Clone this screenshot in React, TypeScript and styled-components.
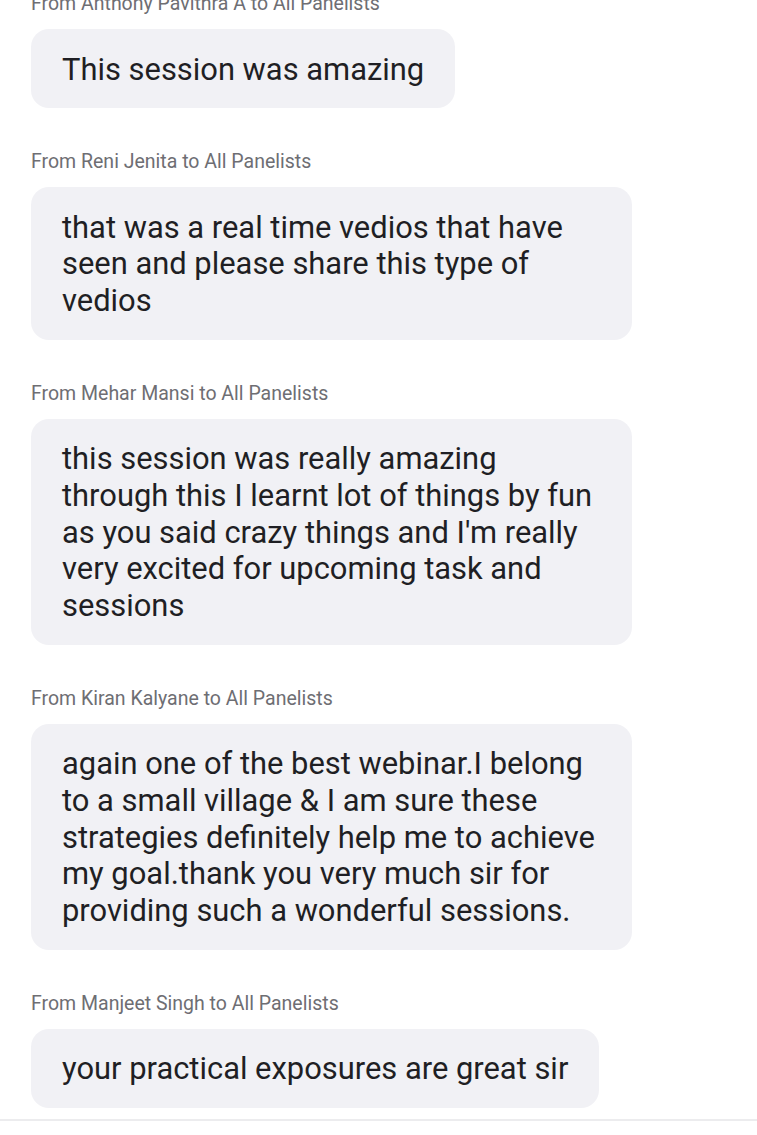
import styled, { createGlobalStyle } from "styled-components";

const GlobalStyle = createGlobalStyle`
  html, body {
    margin: 0;
    padding: 0;
    background: #ffffff;
  }
  body {
    font-family: Roboto, "Noto Sans", "Liberation Sans", sans-serif;
  }
`;

const Page = styled.div`
  width: 757px;
  height: 1135px;
  overflow: hidden;
  display: flex;
  flex-direction: column;
  background: #ffffff;
`;

// the chat list is scrolled, so the first sender line is cut at the top
const Feed = styled.div`
  display: flex;
  flex-direction: column;
  align-items: flex-start;
  padding: 0 31px;
  margin-top: -8px;
`;

const Message = styled.div`
  display: flex;
  flex-direction: column;
  align-items: flex-start;
  gap: 14px;
  margin-bottom: 42px;
`;

const Sender = styled.div`
  font-size: 19.5px;
  line-height: 23px;
  color: #6e6e73;
`;

const Bubble = styled.div`
  max-width: 601px;
  box-sizing: border-box;
  padding: 22.5px 31px 20px;
  background: #f1f1f5;
  border-radius: 18px;
  font-size: 30.9px;
  line-height: 36.7px;
  color: #1f1f24;
`;

const Divider = styled.div`
  height: 2px;
  background: #ececee;
  margin-top: -31px;
`;

const messages = [
  {
    from: "Anthony Pavithra A",
    text: "This session was amazing",
  },
  {
    from: "Reni Jenita",
    text: "that was a real time vedios that have seen and please share this type of vedios",
  },
  {
    from: "Mehar Mansi",
    text: "this session was really amazing through this I learnt lot of things by fun as you said crazy things and I'm really very excited for upcoming task and sessions",
  },
  {
    from: "Kiran Kalyane",
    text: "again one of the best webinar.I belong to a small village & I am sure these strategies definitely help me to achieve my goal.thank you very much sir for providing such a wonderful sessions.",
  },
  {
    from: "Manjeet Singh",
    text: "your practical exposures are great sir",
  },
];

function App() {
  return (
    <>
      <GlobalStyle />
      <Page>
        <Feed>
          {messages.map((m) => (
            <Message key={m.from}>
              <Sender>From {m.from} to All Panelists</Sender>
              <Bubble>{m.text}</Bubble>
            </Message>
          ))}
        </Feed>
        <Divider />
      </Page>
    </>
  );
}

export default App;
